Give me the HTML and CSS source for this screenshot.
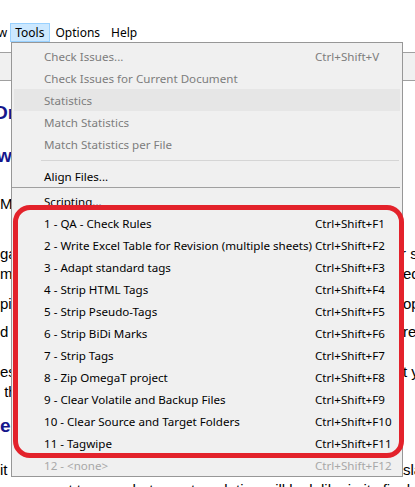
FILE: index.html
```html
<!DOCTYPE html>
<html>
<head>
<meta charset="utf-8">
<link rel="stylesheet" href="styles.css">
</head>
<body>
<div class="app">
  <div class="menubar">
    <span class="mb-item mb-view">View</span>
    <span class="mb-item mb-active">Tools</span>
    <span class="mb-item">Options</span>
    <span class="mb-item">Help</span>
  </div>
  <div class="toolbar"></div>
  <div class="doc">
    <div class="row h1 r-or"><span class="l"><span class="lt">Or</span></span></div>
    <div class="row h1 r-w"><span class="l"><span class="lt">w</span></span></div>
    <div class="row p r-m"><span class="l"><span class="lt">M</span></span></div>
    <div class="row p r-ga"><span class="l"><span class="lt">ga</span></span><span class="r"><span class="rt rs">r s</span></span></div>
    <div class="row p"><span class="l"><span class="lt">m</span></span><span class="r"><span class="rt">ed</span></span></div>
    <div class="row p r-pi"><span class="l"><span class="lt">pi</span></span><span class="r"><span class="rt">op</span></span></div>
    <div class="row p r-di"><span class="l"><span class="lt">d i</span></span><span class="r"><span class="rt">re</span></span></div>
    <div class="row p r-es"><span class="l"><span class="lt">es</span></span><span class="r"><span class="rt">t y</span></span></div>
    <div class="row p"><span class="l"><span class="lt">&nbsp;th</span></span></div>
    <div class="row h1 r-e"><span class="l"><span class="lt">e</span></span></div>
    <div class="row p r-it"><span class="l"><span class="lt">it</span></span><span class="r"><span class="rt">sla</span></span></div>
    <div class="row p"><span class="full">n you want to see what your translation will look like in its final form</span></div>
  </div>

  <div class="menu">
    <div class="mi dis"><span>Check Issues...</span><span>Ctrl+Shift+V</span></div>
    <div class="mi dis"><span>Check Issues for Current Document</span><span></span></div>
    <div class="mi dis hl"><span>Statistics</span><span></span></div>
    <div class="mi dis"><span>Match Statistics</span><span></span></div>
    <div class="mi dis"><span>Match Statistics per File</span><span></span></div>
    <div class="sep"></div>
    <div class="mi"><span>Align Files...</span><span></span></div>
    <div class="sep2"></div>
    <div class="mi"><span>Scripting...</span><span></span></div>
    <div class="mi"><span>1 - QA - Check Rules</span><span>Ctrl+Shift+F1</span></div>
    <div class="mi"><span>2 - Write Excel Table for Revision (multiple sheets)</span><span>Ctrl+Shift+F2</span></div>
    <div class="mi"><span>3 - Adapt standard tags</span><span>Ctrl+Shift+F3</span></div>
    <div class="mi"><span>4 - Strip HTML Tags</span><span>Ctrl+Shift+F4</span></div>
    <div class="mi"><span>5 - Strip Pseudo-Tags</span><span>Ctrl+Shift+F5</span></div>
    <div class="mi"><span>6 - Strip BiDi Marks</span><span>Ctrl+Shift+F6</span></div>
    <div class="mi"><span>7 - Strip Tags</span><span>Ctrl+Shift+F7</span></div>
    <div class="mi"><span>8 - Zip OmegaT project</span><span>Ctrl+Shift+F8</span></div>
    <div class="mi"><span>9 - Clear Volatile and Backup Files</span><span>Ctrl+Shift+F9</span></div>
    <div class="mi"><span>10 - Clear Source and Target Folders</span><span>Ctrl+Shift+F10</span></div>
    <div class="mi"><span>11 - Tagwipe</span><span>Ctrl+Shift+F11</span></div>
    <div class="mi none"><span>12 - &lt;none&gt;</span><span>Ctrl+Shift+F12</span></div>
  </div>
  <div class="mark"></div>
</div>
</body>
</html>
```
FILE: styles.css
```css
* { box-sizing: border-box; }
html, body { margin: 0; padding: 0; background: #fff; }
body { width: 415px; height: 487px; overflow: hidden; }
.app { position: relative; width: 415px; height: 487px; overflow: hidden; }

.menubar {
  margin-top: 23px;
  height: 19px;
  display: flex;
  font-family: "Noto Sans", sans-serif;
  font-size: 12px;
  color: #000;
  white-space: nowrap;
}
.mb-item { padding: 0 5px 0 4px; line-height: 17px; border: 1px solid transparent; }
.mb-view { margin-left: -24px; padding-right: 2px; }
.mb-active { background: #cce8ff; border-color: #99d1ff; }

.toolbar {
  margin-top: 10px;
  height: 29px;
  border-top: 1px solid #a0a0a0;
  border-bottom: 1px solid #a0a0a0;
  background: #f0f0f0;
}

.doc {
  display: flex;
  flex-direction: column;
  font-family: "Liberation Sans", Arial, sans-serif;
  font-size: 15px;
  color: #000;
}
.row { display: flex; height: 20px; align-items: center; white-space: nowrap; }
.row .l { flex: 0 0 12px; width: 12px; overflow: hidden; }
.lt { display: block; }
.row .r { margin-left: auto; width: 12px; overflow: hidden; }
.rt { display: block; }
.rs { margin-left: -2px; }
.h1 { height: 24px; font-weight: bold; font-size: 19px; color: #16168c; }
.r-or { margin-top: 20px; }
.r-or .lt { margin-left: -7px; }
.r-w { margin-top: 19px; }
.r-w .lt { margin-left: -3px; }
.r-m { margin-top: 25px; }
.r-ga { margin-top: 30px; }
.r-pi { margin-top: 10px; }
.r-di { margin-top: 8px; }
.r-es { margin-top: 20px; }
.r-e { margin-top: 13px; }
.r-it { margin-top: 21px; }
.full { flex: 0 0 auto; }

.menu {
  position: absolute;
  left: 11px;
  top: 42px;
  width: 392px;
  height: 435px;
  background: #f0f0f0;
  border: 1px solid #979797;
  padding: 2px 0 0 0;
  font-family: "Noto Sans", sans-serif;
  font-size: 11.6px;
  color: #000;
}
.mi {
  display: grid;
  grid-template-columns: 269px 1fr;
  height: 22px;
  align-items: center;
  padding-left: 32px;
  margin: 0 2px;
  white-space: nowrap;
}
.mi span:first-child { margin-left: -2px; }
.dis { color: #7d7d7d; }
.none { color: #a8a8a8; }
.hl { background: #e6e6e6; }
.sep { height: 10px; display: flex; align-items: center; }
.sep::before { content: ""; display: block; height: 1px; background: #d5d5d5; margin-left: 29px; margin-right: 3px; flex: 1; }
.sep2 { height: 3px; border-top: 1px solid #a0a0a0; margin: 0 2px 0 0; }

.mark {
  position: absolute;
  left: 13px;
  top: 205px;
  width: 391px;
  height: 253px;
  border: 5px solid #e3222b;
  border-radius: 17px;
}
```
